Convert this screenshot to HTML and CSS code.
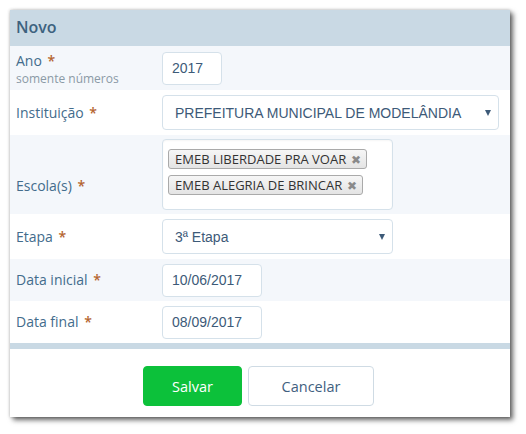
FILE: index.html
```html
<!DOCTYPE html>
<html lang="pt">
<head>
<meta charset="utf-8">
<title>Novo</title>
<link rel="stylesheet" href="styles.css">
</head>
<body>
<div class="panel">
  <div class="panel-header">Novo</div>
  <div class="form">
    <div class="row odd row-ano">
      <div class="label-wrap">
        <div class="label">Ano <span class="req">*</span></div>
        <div class="help">somente números</div>
      </div>
      <div class="field"><div class="input w-ano">2017</div></div>
    </div>
    <div class="row row-inst">
      <div class="label">Instituição <span class="req">*</span></div>
      <div class="field"><div class="select w-inst"><span>PREFEITURA MUNICIPAL DE MODELÂNDIA</span><span class="caret"></span></div></div>
    </div>
    <div class="row odd row-escola">
      <div class="label label-escola">Escola(s) <span class="req">*</span></div>
      <div class="field">
        <div class="multi">
          <span class="tag">EMEB LIBERDADE PRA VOAR <span class="x">✖</span></span>
          <span class="tag">EMEB ALEGRIA DE BRINCAR <span class="x">✖</span></span>
        </div>
      </div>
    </div>
    <div class="row row-etapa">
      <div class="label">Etapa <span class="req">*</span></div>
      <div class="field"><div class="select w-etapa"><span>3ª Etapa</span><span class="caret"></span></div></div>
    </div>
    <div class="row odd row-date">
      <div class="label">Data inicial <span class="req">*</span></div>
      <div class="field"><div class="input w-date">10/06/2017</div></div>
    </div>
    <div class="row row-date">
      <div class="label">Data final <span class="req">*</span></div>
      <div class="field"><div class="input w-date">08/09/2017</div></div>
    </div>
  </div>
  <div class="footer">
    <button class="btn btn-save">Salvar</button>
    <button class="btn btn-cancel">Cancelar</button>
  </div>
</div>
</body>
</html>
```
FILE: styles.css
```css
html, body {
  margin: 0;
  padding: 0;
  background: #ffffff;
}
body {
  padding: 10px;
  font-family: "Open Sans", "Liberation Sans", sans-serif;
}
.panel {
  width: 500px;
  height: 407px;
  background: #ffffff;
  box-shadow: 3px 3px 5px rgba(0,0,0,0.6), 0 0 3px rgba(0,0,0,0.25);
  display: flex;
  flex-direction: column;
}
.panel-header {
  height: 36px;
  background: #c9d9e4;
  color: #3d627f;
  font-size: 16px;
  font-weight: 600;
  line-height: 34px;
  padding-left: 6px;
}
.form {
  border-bottom: 6px solid #c9d9e4;
}
.row {
  display: grid;
  grid-template-columns: 152px 1fr;
  align-items: center;
  background: #ffffff;
}
.row.odd {
  background: #f4f7fb;
}
.label-wrap, .label {
  padding-left: 6px;
}
.label {
  color: #436c8c;
  font-size: 14px;
  line-height: 18px;
}
.label-wrap {
  margin-top: 2px;
}
.label-wrap .label {
  padding-left: 0;
}
.help {
  color: #8b9aa6;
  font-size: 12px;
  line-height: 16px;
  margin-top: 1px;
}
.req {
  color: #b5652f;
  font-weight: 600;
  margin-left: 2px;
}
.row-ano { height: 44px; }
.row-inst { height: 45px; }
.row-escola { height: 79px; }
.row-etapa { height: 45px; }
.row-date { height: 42px; }
.label-escola {
  margin-top: 22px;
}
.input, .select, .multi {
  box-sizing: border-box;
  background: #ffffff;
  border: 1px solid #d5e1ea;
  border-radius: 4px;
  color: #3d5a78;
  font-family: "Liberation Sans", Arial, sans-serif;
  font-size: 14px;
}
.input {
  height: 33px;
  line-height: 31px;
  padding-left: 9px;
}
.w-ano { width: 60px; }
.w-date { width: 100px; }
.select {
  height: 35px;
  display: flex;
  align-items: center;
  justify-content: space-between;
  padding: 0 7px 0 12px;
}
.w-inst { width: 337px; }
.w-etapa { width: 231px; }
.caret {
  width: 0;
  height: 0;
  border-left: 3.5px solid transparent;
  border-right: 3.5px solid transparent;
  border-top: 6px solid #3d5a78;
  margin-top: 1px;
}
.multi {
  width: 231px;
  height: 71px;
  padding: 9px 5px 0 5px;
  display: flex;
  flex-direction: column;
  align-items: flex-start;
  gap: 6px;
  box-shadow: inset 0 1px 2px rgba(0,0,0,0.04);
}
.tag {
  box-sizing: border-box;
  height: 20px;
  line-height: 18px;
  padding: 0 5px 0 6px;
  border: 1px solid #aaaaaa;
  border-radius: 3px;
  background: linear-gradient(#f6f6f6, #e4e4e4);
  color: #333333;
  font-family: "Open Sans", sans-serif;
  font-size: 13px;
}
.x {
  color: #8a8a8a;
  font-size: 11.5px;
  margin-left: 1px;
}
.footer {
  flex: 1;
  display: flex;
  justify-content: center;
  align-items: flex-start;
  gap: 6px;
  padding-top: 17px;
  padding-right: 3px;
}
.btn {
  height: 40px;
  border-radius: 4px;
  font-family: "Open Sans", sans-serif;
  font-size: 14.5px;
  cursor: pointer;
}
.btn-save {
  width: 99px;
  background: #0cc13a;
  border: 1px solid #0cc13a;
  color: #ffffff;
}
.btn-cancel {
  width: 126px;
  background: #ffffff;
  border: 1px solid #cfdbe4;
  color: #3f6080;
}
```
